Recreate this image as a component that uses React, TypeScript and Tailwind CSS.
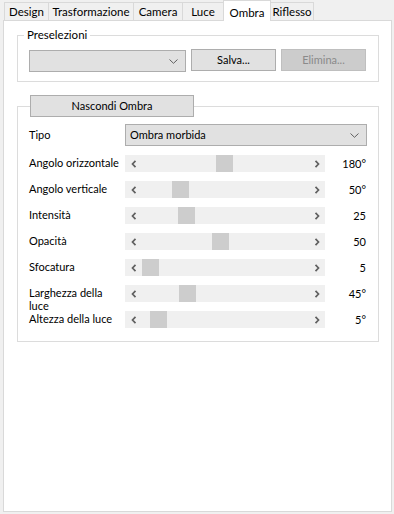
import React from "react";

const tabs = [
  { name: "Design", w: "w-[44px]", b: "border-l" },
  { name: "Trasformazione", w: "w-[85px]", b: "border-l" },
  { name: "Camera", w: "w-[49px]", b: "border-l" },
  { name: "Luce", w: "w-[41px]", b: "border-l" },
  { name: "Ombra", w: "w-[48px]", b: "border-x", active: true },
  { name: "Riflesso", w: "w-[43px]", b: "border-r" },
];

const sliders = [
  { label: "Angolo orizzontale", pos: 91, value: "180°" },
  { label: "Angolo verticale", pos: 47, value: "50°" },
  { label: "Intensità", pos: 53, value: "25" },
  { label: "Opacità", pos: 87, value: "50" },
  { label: "Sfocatura", pos: 17, value: "5" },
  { label: "Larghezza della luce", pos: 54, value: "45°" },
  { label: "Altezza della luce", pos: 25, value: "5°" },
];

function Chevron({ dir }: { dir: "left" | "right" }) {
  return (
    <svg width="6" height="8" viewBox="0 0 6 8">
      <path
        d={dir === "left" ? "M4.5 0.8 L1.5 4 L4.5 7.2" : "M1.5 0.8 L4.5 4 L1.5 7.2"}
        fill="none"
        stroke="#606060"
        strokeWidth="1.7"
      />
    </svg>
  );
}

function DownArrow() {
  return (
    <svg width="9" height="5" viewBox="0 0 9 5">
      <path d="M0.5 0.5 L4.5 4.3 L8.5 0.5" fill="none" stroke="#606060" strokeWidth="1" />
    </svg>
  );
}

function Slider({ pos }: { pos: number }) {
  return (
    <div className="relative flex h-[17px] w-[200px] items-center justify-between bg-[#f0f0f0]">
      <div className="flex h-[17px] w-[17px] items-center justify-center">
        <Chevron dir="left" />
      </div>
      <div
        className="absolute top-0 h-[17px] w-[17px] bg-[#cdcdcd]"
        style={{ left: pos }}
      />
      <div className="flex h-[17px] w-[17px] items-center justify-center">
        <Chevron dir="right" />
      </div>
    </div>
  );
}

export default function App() {
  return (
    <div className="h-[514px] w-[394px] overflow-hidden bg-[#f0f0f0] font-['Lato','Liberation_Sans',sans-serif] text-[11px] text-black">
      {/* tab strip */}
      <div className="relative z-10 flex h-[21px] items-end pl-[4px]">
        {tabs.map((t) =>
          t.active ? (
            <div
              key={t.name}
              className={`flex h-[21px] items-start justify-center border-t border-[#d9d9d9] bg-white pt-[3px] text-[11.5px] ${t.b} ${t.w}`}
            >
              {t.name}
            </div>
          ) : (
            <div
              key={t.name}
              className={`mb-[1px] flex h-[18px] items-center justify-center whitespace-nowrap border-t border-[#d9d9d9] bg-[#f0f0f0] pt-[1px] text-[11.5px] ${t.b} ${t.w}`}
            >
              {t.name}
            </div>
          )
        )}
      </div>

      {/* panel */}
      <div className="-mt-[1px] ml-[3px] h-[492px] w-[389px] border border-[#d9d9d9] bg-white">
        {/* Preselezioni */}
        <fieldset className="ml-[13px] mt-[7px] w-[362px] border border-[#dcdcdc] pb-[9px]">
          <legend className="ml-[6px] px-[3px] text-[11.5px] leading-[14px]">Preselezioni</legend>
          <div className="flex items-start gap-[5px] pl-[11px] pt-[7px]">
            <div className="mt-[1px] flex h-[22px] w-[157px] items-center justify-end border border-[#adadad] bg-[#e1e1e1] pr-[7px]">
              <DownArrow />
            </div>
            <div className="flex h-[22px] w-[85px] items-center justify-center border border-[#adadad] bg-[#e1e1e1]">
              Salva...
            </div>
            <div className="flex h-[22px] w-[85px] items-center justify-center border border-[#bfbfbf] bg-[#cccccc] text-[#8a8a8a]">
              Elimina...
            </div>
          </div>
        </fieldset>

        {/* Ombra group */}
        <fieldset className="ml-[13px] mt-[13px] w-[362px] border border-[#dcdcdc] pb-[4px]">
          <legend className="ml-[12px]">
            <div className="flex h-[22px] w-[164px] items-center justify-center border border-[#adadad] bg-[#e1e1e1]">
              Nascondi Ombra
            </div>
          </legend>
          <div className="flex flex-col pl-[11px] pt-[7px]">
            <div className="mb-[9px] flex h-[22px] items-center">
              <div className="w-[96px]">Tipo</div>
              <div className="flex h-[22px] w-[242px] items-center justify-between border border-[#adadad] bg-[#e1e1e1] pl-[4px] pr-[7px]">
                <span>Ombra morbida</span>
                <DownArrow />
              </div>
            </div>
            {sliders.map((s) => (
              <div key={s.label} className="flex h-[26px] items-start">
                <div className="w-[96px] pt-[1px] leading-[13px]">
                  {s.label === "Larghezza della luce" ? (
                    <>
                      Larghezza della
                      <br />
                      luce
                    </>
                  ) : (
                    s.label
                  )}
                </div>
                <Slider pos={s.pos} />
                <div className="w-[41px] text-right leading-[17px]">{s.value}</div>
              </div>
            ))}
          </div>
        </fieldset>
      </div>
    </div>
  );
}
